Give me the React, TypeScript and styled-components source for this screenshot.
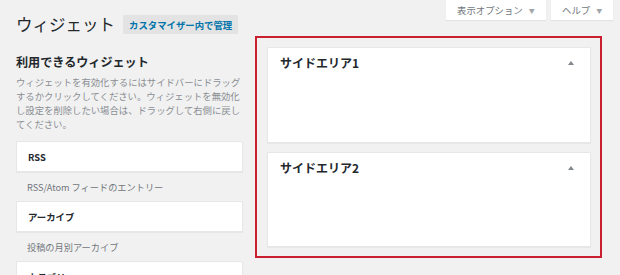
import styled, { createGlobalStyle } from "styled-components"

const Global = createGlobalStyle`
  html, body {
    margin: 0;
    padding: 0;
    background: #f1f1f1;
  }
  body {
    font-family: "Noto Sans CJK JP", "Noto Sans", sans-serif;
    color: #23282d;
    width: 620px;
    height: 275px;
    overflow: hidden;
  }
`

const Page = styled.div`
  padding: 0 7px 0 16px;
`

const Header = styled.div`
  display: flex;
  justify-content: space-between;
  align-items: flex-start;
  margin-bottom: 2px;
`

const TitleGroup = styled.div`
  display: flex;
  align-items: center;
  margin-top: 15px;
  height: 19px;
  gap: 8px;
  h1 {
    margin: 0;
    font-size: 16.5px;
    line-height: 19px;
    font-weight: 400;
    color: #23282d;
  }
`

const ManageButton = styled.span`
  display: inline-flex;
  align-items: center;
  height: 19px;
  padding: 0 6px;
  background: #e3e3e3;
  color: #0073aa;
  font-size: 9.4px;
  font-weight: 700;
  border-radius: 1px;
`

const Tabs = styled.div`
  display: flex;
  gap: 5px;
`

const Tab = styled.div<{ $w: number }>`
  width: ${(p) => p.$w}px;
  height: 20px;
  box-sizing: border-box;
  display: flex;
  align-items: center;
  padding-left: 11px;
  background: #fff;
  box-shadow: 0 1px 1px rgba(0, 0, 0, 0.06);
  color: #72777c;
  font-size: 9.4px;
  span {
    margin-left: 6px;
    font-size: 6px;
    color: #a0a5aa;
  }
`

const Main = styled.div`
  display: flex;
  align-items: flex-start;
  gap: 12px;
`

const Available = styled.div`
  width: 227px;
  padding-top: 18px;
  h2 {
    margin: 0;
    font-size: 12.1px;
    line-height: 16px;
    font-weight: 700;
    color: #23282d;
  }
`

const Description = styled.p`
  margin: 5px 0 10px;
  font-size: 9.35px;
  line-height: 14px;
  color: #8a8e93;
  width: 230px;
`

const WidgetBox = styled.div`
  height: 31px;
  box-sizing: border-box;
  display: flex;
  align-items: center;
  padding-left: 11px;
  background: #fff;
  border: 1px solid #e7e7e7;
  box-shadow: 0 1px 1px rgba(0, 0, 0, 0.04);
  font-size: 9.4px;
  font-weight: 700;
  color: #23282d;
`

const WidgetDesc = styled.div`
  height: 29px;
  padding-left: 11px;
  display: flex;
  align-items: center;
  font-size: 9.2px;
  color: #72777c;
`

const Highlight = styled.div`
  width: 347px;
  height: 222px;
  box-sizing: border-box;
  border: 2px solid #c91f2e;
  padding: 9px 9px 9px 10px;
  display: flex;
  flex-direction: column;
  gap: 9px;
`

const Sidebar = styled.div`
  height: 96px;
  box-sizing: border-box;
  background: #fff;
  border: 1px solid #e7e7e7;
  box-shadow: 0 1px 1px rgba(0, 0, 0, 0.04);
  display: flex;
  justify-content: space-between;
  align-items: flex-start;
  padding: 7px 16px 0 12px;
  h3 {
    margin: 0;
    font-size: 12px;
    line-height: 16px;
    font-weight: 700;
    color: #23282d;
  }
`

const Toggle = styled.span`
  margin-top: 6px;
  width: 0;
  height: 0;
  border-left: 3px solid transparent;
  border-right: 3px solid transparent;
  border-bottom: 4px solid #82878c;
`

const widgets = [
  { name: "RSS", desc: "RSS/Atom フィードのエントリー" },
  { name: "アーカイブ", desc: "投稿の月別アーカイブ" },
  { name: "カテゴリー", desc: "カテゴリーのリストやドロップダウン" },
]

const App = () => {
  return (
    <Page>
      <Global />
      <Header>
        <TitleGroup>
          <h1>ウィジェット</h1>
          <ManageButton>カスタマイザー内で管理</ManageButton>
        </TitleGroup>
        <Tabs>
          <Tab $w={100}>
            表示オプション<span>▼</span>
          </Tab>
          <Tab $w={62}>
            ヘルプ<span>▼</span>
          </Tab>
        </Tabs>
      </Header>
      <Main>
        <Available>
          <h2>利用できるウィジェット</h2>
          <Description>
            ウィジェットを有効化するにはサイドバーにドラッグするかクリックしてください。ウィジェットを無効化し設定を削除したい場合は、ドラッグして右側に戻してください。
          </Description>
          {widgets.map((w) => (
            <div key={w.name}>
              <WidgetBox>{w.name}</WidgetBox>
              <WidgetDesc>{w.desc}</WidgetDesc>
            </div>
          ))}
        </Available>
        <Highlight>
          <Sidebar>
            <h3>サイドエリア1</h3>
            <Toggle />
          </Sidebar>
          <Sidebar>
            <h3>サイドエリア2</h3>
            <Toggle />
          </Sidebar>
        </Highlight>
      </Main>
    </Page>
  )
}

export default App
